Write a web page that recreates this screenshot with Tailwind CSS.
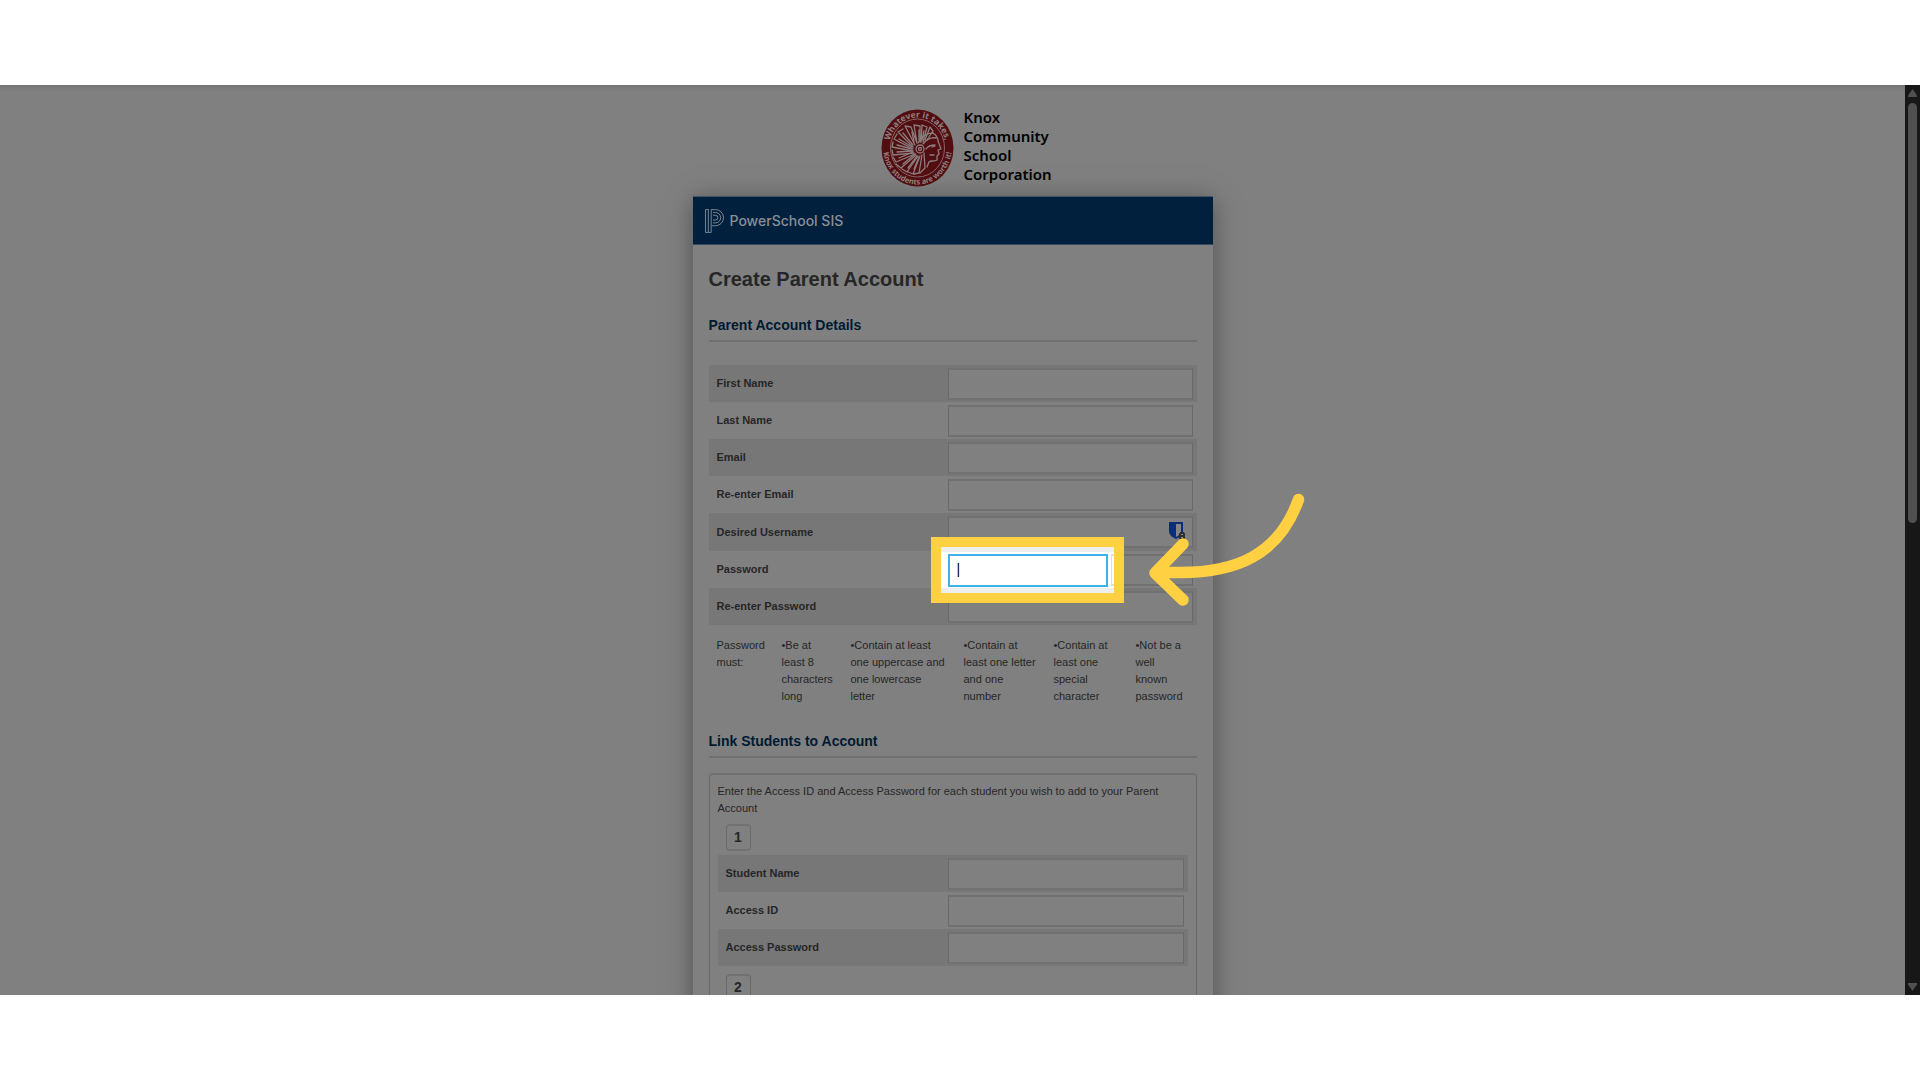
<!DOCTYPE html>
<html lang="en">
<head>
<meta charset="utf-8">
<title>Create Parent Account</title>
<script src="https://cdn.jsdelivr.net/npm/@tailwindcss/browser@4"></script>
</head>
<body class="bg-white font-['Liberation_Sans',Arial,sans-serif]">
<div class="relative flex h-screen flex-col overflow-hidden py-[85px]">
  <div class="flex min-h-0 flex-1">
    <main class="min-w-0 flex-1 overflow-hidden bg-[#808080] text-[11px] leading-[17px] text-[#262626] shadow-[inset_0_5px_5px_-3px_#727272]">
      <header class="mx-auto flex h-[111px] w-[520px] items-start gap-2.5 pt-6 pl-[188px]">
        <svg class="h-[78px] w-[73px] shrink-0" viewBox="0 0 73 78" preserveAspectRatio="none" role="img" aria-label="Knox Community School Corporation seal">
          <ellipse cx="36.5" cy="39" rx="36" ry="38.5" fill="#520d10"/>
          <ellipse cx="36.5" cy="39" rx="27" ry="29" fill="none" stroke="#8a6365" stroke-width="1"/>
          <defs>
            <path id="arcTop" d="M8 39a28.500 30.500 0 0 1 57 0"/>
            <path id="arcBottom" d="M2 38a34.500 37.500 0 0 0 69 0"/>
          </defs>
          <g fill="#8f8080" font-family="Noto Sans, sans-serif" font-size="8.500" font-weight="700">
            <text><textPath href="#arcTop" startOffset="50%" text-anchor="middle">Whatever it takes,</textPath></text>
            <text font-size="7.500"><textPath href="#arcBottom" startOffset="50%" text-anchor="middle">Knox students are worth it!</textPath></text>
          </g>
          <g fill="none" stroke="#8b7d7d" stroke-width="1.300" stroke-linecap="round" stroke-linejoin="round">
            <path d="M52 24c3 2 5 5 5 8l3 8-3 1 1 4-2 2v4c-3 2-6 0-8 2l-2 5M37 34c4-7 9-10 15-10M42 35c4-5 8-7 13-6M45 40c2-3 6-4 9-4M54 37l-3 1M53 46h-4"/>
            <circle cx="39" cy="40" r="4"/><circle cx="39" cy="40" r="1.500"/>
            <path d="M34 36 24 17l6 1 6 16M36 34l-3-18 6 1v16M40 33l1-17 5 2-4 15M44 31l5-13 3 4-6 9M32 38 17 23l5-3M32 40 13 30l3-5M32 42 11 38l1-5M33 44 12 46l-1-5M34 45 15 53l-3-5M35 46 20 59l-5-4M37 47 26 63l-5-3M39 47 32 65l-5-2M41 46l-3 18-5 1M43 44l1 15-5 5"/>
            <path d="M31 23l2 10M38 21v10M43 22l-2 9M22 24l10 12M18 30l13 8M16 36l15 4M16 43l15-1M18 49l14-6M22 55l12-10M27 59l9-12M33 60l5-12"/>
          </g>
        </svg>
        <p class="-mt-px font-['Noto_Sans',sans-serif] text-[15px] leading-[19px] font-semibold text-black">Knox<br>Community<br>School<br>Corporation</p>
      </header>

      <section class="mx-auto w-[520px] bg-[#808080] pb-8 shadow-[0_4px_24px_#505050]">
        <div class="flex h-[49px] items-center gap-1.5 border-y border-t-[#435568] border-b-[#324b62] bg-[#00203d] pl-3 text-[#898f95]">
          <svg class="h-[26px] w-[19px]" viewBox="0 0 20 26" fill="none" stroke="#7f8a95" stroke-width="1" aria-hidden="true">
            <path d="M.5 25V1M3.500 .5V25M.5 1h3M.5 25h3M6.500 1v24h-3M6.500 1H11a8.500 8.500 0 0 1 0 17H7M8.500 4H11a5.500 5.500 0 0 1 0 11H8.500M8.500 7H11a2.500 2.500 0 0 1 0 5H8.500"/>
          </svg>
          <span class="font-['Inter',sans-serif] text-[14px] leading-5 font-medium">PowerSchool SIS</span>
        </div>

        <form class="px-4">
          <h1 class="pt-[22px] text-[20px] leading-6 font-bold text-[#262626]">Create Parent Account</h1>
          <h2 class="mt-[26px] flex h-[25px] items-start border-b-2 border-[#717171] text-[14px] leading-4 font-bold text-[#001a33]">Parent Account Details</h2>

          <div class="mt-[23px] font-bold">
            <div class="flex h-[37px] items-center bg-[#777777] pr-1 pl-2"><label for="first" class="w-[231px]">First Name</label><input id="first" class="h-8 min-w-0 flex-1 border border-y-2 border-x-[#696969] border-y-[#717171] bg-[#808080]"></div>
            <div class="flex h-[37px] items-center pr-1 pl-2"><label for="last" class="w-[231px]">Last Name</label><input id="last" class="h-8 min-w-0 flex-1 border border-y-2 border-x-[#696969] border-y-[#717171] bg-[#808080]"></div>
            <div class="flex h-[37px] items-center bg-[#777777] pr-1 pl-2"><label for="email" class="w-[231px]">Email</label><input id="email" type="email" class="h-8 min-w-0 flex-1 border border-y-2 border-x-[#696969] border-y-[#717171] bg-[#808080]"></div>
            <div class="flex h-[37px] items-center pr-1 pl-2"><label for="email2" class="w-[231px]">Re-enter Email</label><input id="email2" type="email" class="h-8 min-w-0 flex-1 border border-y-2 border-x-[#696969] border-y-[#717171] bg-[#808080]"></div>
            <div class="relative flex h-[38px] items-center bg-[#777777] pr-1 pl-2"><label for="user" class="w-[231px]">Desired Username</label><input id="user" class="h-8 min-w-0 flex-1 border border-y-2 border-x-[#696969] border-y-[#717171] bg-[#808080]">
              <svg class="absolute top-[9px] right-3 h-[18px] w-4" viewBox="0 0 16 18" aria-hidden="true">
                <path d="M0 0h14v9c0 4-3 6-7 8-4-2-7-4-7-8z" fill="#0a2f78"/><path d="M7 2h5v7c0 3-2 4-5 6z" fill="#858585"/>
                <path d="M10 17v-6h1v-1h4v1h1v6z" fill="#303030"/><path d="M12 12h2v1h-2zM12 15h2v1h-2z" fill="#888"/>
              </svg>
            </div>
            <div class="relative flex h-[37px] items-center pr-1 pl-2">
              <label for="pass" class="w-[231px]">Password</label>
              <div class="mr-[3px] w-40"></div>
              <output for="pass" class="h-8 flex-1 border border-y-2 border-x-[#696969] border-y-[#717171]"></output>
              <div class="absolute -top-3.5 left-[222px] z-10 flex h-[66px] w-[193px] items-center overflow-hidden border-10 border-[#ffd042] bg-white pl-[7px] shadow-[inset_0_5px_0_#eeeeee,inset_0_-5px_0_#eeeeee]">
                <input id="pass" type="text" value="|" class="mr-[3px] h-[33px] w-40 shrink-0 border-2 border-[#3fb2e8] bg-white px-[7px] pb-0.5 text-[14px] font-normal text-black outline-none">
                <span class="h-8 w-10 shrink-0 border border-y-2 border-[#dddddd]"></span>
              </div>
              <svg class="absolute -top-[61px] left-[438px] z-20 h-[118px] w-[160px]" viewBox="0 0 160 118" fill="none" stroke="#ffd042" stroke-width="11.500" stroke-linecap="round" stroke-linejoin="round" aria-hidden="true">
                <path d="M151.500 9.500C133 62 92 87 15 82M36 54 8 83l28 27"/>
              </svg>
            </div>
            <div class="flex h-[37px] items-center bg-[#777777] pr-1 pl-2"><label for="pass2" class="w-[231px]">Re-enter Password</label><input id="pass2" type="password" class="h-8 min-w-0 flex-1 border border-y-2 border-x-[#696969] border-y-[#717171] bg-[#808080]"></div>
          </div>

          <div class="mt-3 grid grid-cols-[65px_69px_113px_90px_82px_53px] pl-2">
            <p>Password<br>must:</p>
            <p>•Be at<br>least 8<br>characters<br>long</p>
            <p>•Contain at least<br>one uppercase and<br>one lowercase<br>letter</p>
            <p>•Contain at<br>least one letter<br>and one<br>number</p>
            <p>•Contain at<br>least one<br>special<br>character</p>
            <p>•Not be a<br>well<br>known<br>password</p>
          </div>

          <h2 class="mt-7 flex h-[25px] items-start border-b-2 border-[#717171] text-[14px] leading-4 font-bold text-[#001a33]">Link Students to Account</h2>

          <div class="mt-[15px] rounded-sm border border-t-2 border-x-[#696969] border-t-[#717171] px-2 pt-2 pb-4">
            <p>Enter the Access ID and Access Password for each student you wish to add to your Parent Account</p>
            <div class="mt-[7px] ml-2 flex h-[27px] w-[25px] items-center justify-center rounded-sm border border-y-2 border-x-[#696969] border-y-[#717171] text-[14px] font-bold">1</div>
            <div class="mt-1 font-bold">
              <div class="flex h-[37px] items-center bg-[#777777] pr-1 pl-2"><label for="s1" class="w-[222px]">Student Name</label><input id="s1" class="h-8 min-w-0 flex-1 border border-y-2 border-x-[#696969] border-y-[#717171] bg-[#808080]"></div>
              <div class="flex h-[37px] items-center pr-1 pl-2"><label for="a1" class="w-[222px]">Access ID</label><input id="a1" class="h-8 min-w-0 flex-1 border border-y-2 border-x-[#696969] border-y-[#717171] bg-[#808080]"></div>
              <div class="flex h-[37px] items-center bg-[#777777] pr-1 pl-2"><label for="p1" class="w-[222px]">Access Password</label><input id="p1" type="password" class="h-8 min-w-0 flex-1 border border-y-2 border-x-[#696969] border-y-[#717171] bg-[#808080]"></div>
            </div>
            <div class="mt-2 ml-2 flex h-[27px] w-[25px] items-center justify-center rounded-sm border border-y-2 border-x-[#696969] border-y-[#717171] text-[14px] font-bold">2</div>
          </div>
        </form>
      </section>
    </main>
    <div class="flex w-[15px] flex-col items-center justify-between bg-[#171717] py-1" aria-hidden="true">
      <div class="flex flex-col items-center gap-1.5">
        <svg class="h-2 w-[9px]" viewBox="0 0 9 8"><path d="M4.500 0 9 6.500V8H0V6.500z" fill="#505050"/></svg>
        <div class="h-[420px] w-[9px] rounded-full bg-[#505050]"></div>
      </div>
      <svg class="h-2 w-[9px]" viewBox="0 0 9 8"><path d="M4.500 8 9 1.500V0H0v1.500z" fill="#505050"/></svg>
    </div>
  </div>
</div>
</body>
</html>
